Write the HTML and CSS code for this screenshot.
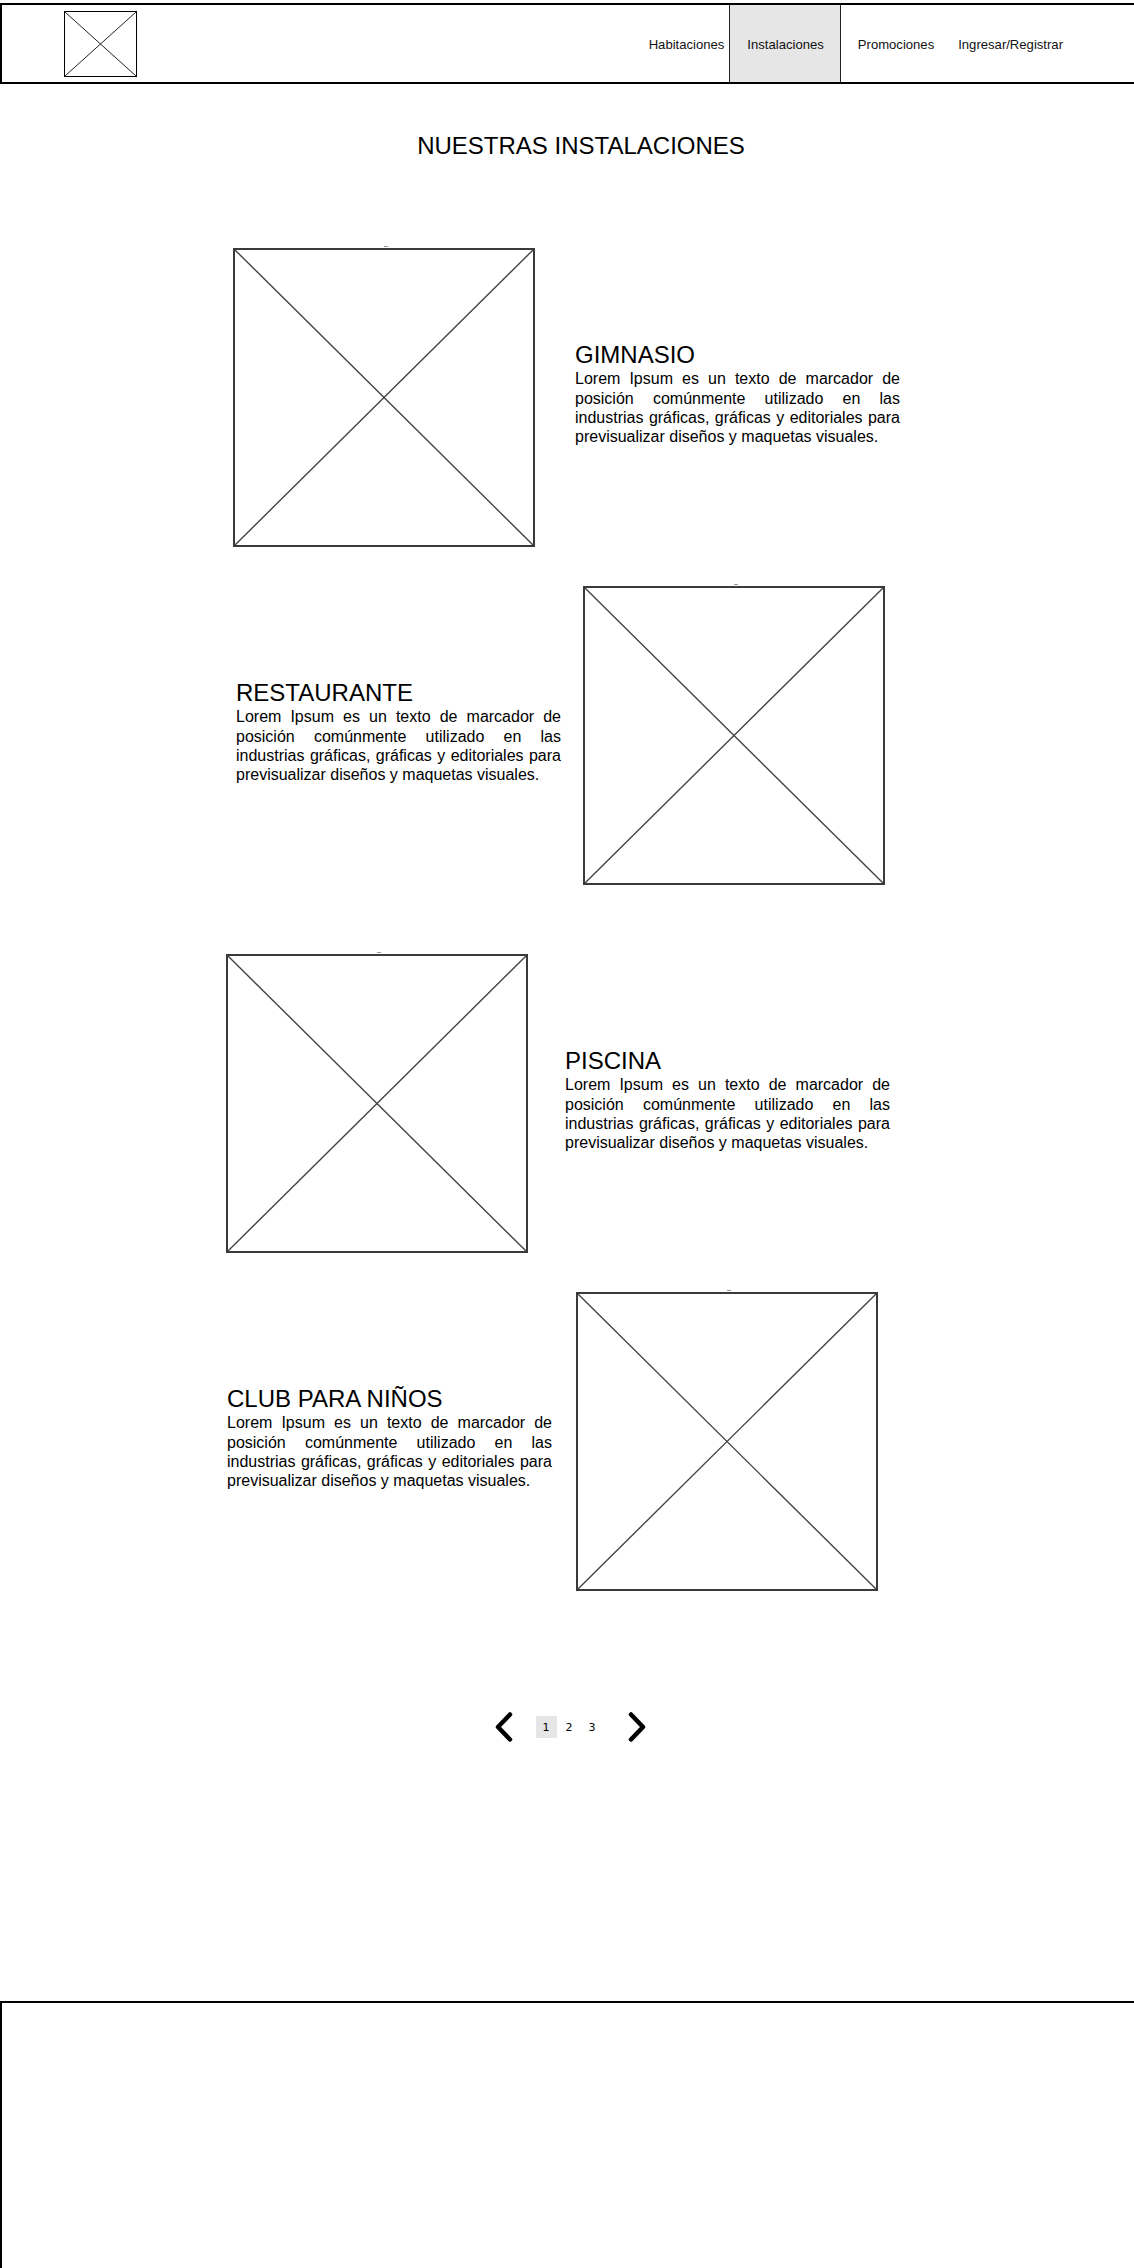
FILE: index.html
```html
<!DOCTYPE html>
<html lang="es">
<head>
<meta charset="utf-8">
<title>Nuestras Instalaciones</title>
<link rel="stylesheet" href="styles.css">
</head>
<body>
<header class="topbar">
  <div class="logo">
    <svg class="cross" viewBox="0 0 100 100" preserveAspectRatio="none">
      <line x1="0" y1="0" x2="100" y2="100" vector-effect="non-scaling-stroke"/>
      <line x1="100" y1="0" x2="0" y2="100" vector-effect="non-scaling-stroke"/>
    </svg>
  </div>
  <nav class="nav">
    <a class="nav-item nav-first">Habitaciones</a>
    <a class="nav-item nav-active">Instalaciones</a>
    <a class="nav-item nav-promo">Promociones</a>
    <a class="nav-item nav-login">Ingresar/Registrar</a>
  </nav>
</header>

<main class="content">
  <h1 class="page-title">NUESTRAS INSTALACIONES</h1>

  <section class="facility f1">
    <div class="photo">
      <svg class="cross" viewBox="0 0 100 100" preserveAspectRatio="none">
        <line x1="0" y1="0" x2="100" y2="100" vector-effect="non-scaling-stroke"/>
        <line x1="100" y1="0" x2="0" y2="100" vector-effect="non-scaling-stroke"/>
      </svg>
    </div>
    <div class="info">
      <h2 class="info-title">GIMNASIO</h2>
      <p class="info-text">Lorem Ipsum es un texto de marcador de posición comúnmente utilizado en las industrias gráficas, gráficas y editoriales para previsualizar diseños y maquetas visuales.</p>
    </div>
  </section>

  <section class="facility f2">
    <div class="info">
      <h2 class="info-title">RESTAURANTE</h2>
      <p class="info-text">Lorem Ipsum es un texto de marcador de posición comúnmente utilizado en las industrias gráficas, gráficas y editoriales para previsualizar diseños y maquetas visuales.</p>
    </div>
    <div class="photo">
      <svg class="cross" viewBox="0 0 100 100" preserveAspectRatio="none">
        <line x1="0" y1="0" x2="100" y2="100" vector-effect="non-scaling-stroke"/>
        <line x1="100" y1="0" x2="0" y2="100" vector-effect="non-scaling-stroke"/>
      </svg>
    </div>
  </section>

  <section class="facility f3">
    <div class="photo">
      <svg class="cross" viewBox="0 0 100 100" preserveAspectRatio="none">
        <line x1="0" y1="0" x2="100" y2="100" vector-effect="non-scaling-stroke"/>
        <line x1="100" y1="0" x2="0" y2="100" vector-effect="non-scaling-stroke"/>
      </svg>
    </div>
    <div class="info">
      <h2 class="info-title">PISCINA</h2>
      <p class="info-text">Lorem Ipsum es un texto de marcador de posición comúnmente utilizado en las industrias gráficas, gráficas y editoriales para previsualizar diseños y maquetas visuales.</p>
    </div>
  </section>

  <section class="facility f4">
    <div class="info">
      <h2 class="info-title">CLUB PARA NIÑOS</h2>
      <p class="info-text">Lorem Ipsum es un texto de marcador de posición comúnmente utilizado en las industrias gráficas, gráficas y editoriales para previsualizar diseños y maquetas visuales.</p>
    </div>
    <div class="photo">
      <svg class="cross" viewBox="0 0 100 100" preserveAspectRatio="none">
        <line x1="0" y1="0" x2="100" y2="100" vector-effect="non-scaling-stroke"/>
        <line x1="100" y1="0" x2="0" y2="100" vector-effect="non-scaling-stroke"/>
      </svg>
    </div>
  </section>

  <div class="pager">
    <svg class="chev chev-left" viewBox="0 0 20 30">
      <polyline points="16,2.5 4,15 16,27.5"/>
    </svg>
    <span class="page page-current">1</span>
    <span class="page">2</span>
    <span class="page">3</span>
    <svg class="chev chev-right" viewBox="0 0 20 30">
      <polyline points="4,2.5 16,15 4,27.5"/>
    </svg>
  </div>
</main>

<footer class="footer"></footer>
</body>
</html>
```

FILE: styles.css
```css
* { box-sizing: border-box; }

html, body {
  margin: 0;
  padding: 0;
  background: #fff;
}

body {
  font-family: "Liberation Sans", Arial, sans-serif;
  color: #000;
  overflow: hidden;
}

.cross {
  display: block;
  width: 100%;
  height: 100%;
}

.cross line {
  stroke: #333;
  stroke-width: 1.3;
}

/* Header */
.topbar {
  margin-top: 3px;
  height: 81px;
  border-top: 2px solid #000;
  border-bottom: 2px solid #000;
  border-left: 2px solid #000;
  display: flex;
  align-items: stretch;
}

.logo {
  align-self: center;
  width: 73px;
  height: 66px;
  margin-left: 62px;
  border: 1.5px solid #000;
}

.logo .cross line {
  stroke: #222;
  stroke-width: 1;
}

.nav {
  margin-left: auto;
  display: flex;
  align-items: stretch;
  font-size: 13.1px;
  color: #111;
}

.nav-item {
  display: flex;
  align-items: center;
  padding-top: 1px;
}

.nav-first { padding-right: 5px; }

.nav-active {
  background: #e6e6e6;
  border-left: 1px solid #222;
  border-right: 1px solid #222;
  padding-left: 17px;
  padding-right: 16px;
}

.nav-promo { padding-left: 17px; }

.nav-login {
  padding-left: 24px;
  margin-right: 71px;
}

/* Title */
.page-title {
  margin: 48px 0 0;
  padding-left: 28px;
  text-align: center;
  font-size: 24px;
  font-weight: normal;
  line-height: 28px;
  color: #000;
}

/* Facilities */
.facility {
  display: flex;
  align-items: center;
}

.f1 { margin: 88px 0 0 233px; gap: 40px; }
.f2 { margin: 39px 0 0 236px; gap: 22px; }
.f3 { margin: 69px 0 0 226px; gap: 37px; }
.f4 { margin: 39px 0 0 227px; gap: 24px; }

.photo {
  position: relative;
  flex: none;
  width: 302px;
  height: 299px;
  border: 2px solid #3a3a3a;
}

.photo::before {
  content: "";
  position: absolute;
  top: -4px;
  left: 50%;
  width: 4px;
  height: 1px;
  background: #999;
}

.photo .cross line {
  stroke: #444;
  stroke-width: 1.4;
}

.info {
  width: 325px;
  flex: none;
  margin-top: -5.5px;
}

.info-title {
  margin: 0 0 2.5px;
  font-size: 24px;
  font-weight: normal;
  line-height: 24px;
  color: #000;
}

.info-text {
  margin: 0;
  font-size: 16px;
  line-height: 19.3px;
  text-align: justify;
  color: #000;
}

/* Pager */
.pager {
  margin-top: 121px;
  display: flex;
  align-items: center;
  justify-content: center;
  padding-left: 6px;
  height: 30px;
}

.chev {
  width: 20px;
  height: 30px;
  flex: none;
}

.chev polyline {
  fill: none;
  stroke: #000;
  stroke-width: 4.5;
  stroke-linecap: round;
  stroke-linejoin: round;
}

.chev-left { margin-right: 22px; }
.chev-right { margin-left: 24px; }

.page {
  width: 21px;
  height: 22px;
  display: flex;
  align-items: center;
  justify-content: center;
  font-family: "DejaVu Sans", sans-serif;
  font-size: 11px;
  color: #000;
  margin-right: 2px;
}

.page:last-of-type { margin-right: 0; }

.page-current { background: #e6e6e6; }

/* Footer */
.footer {
  margin-top: 259px;
  height: 300px;
  border-top: 2px solid #000;
  border-left: 2px solid #000;
}
```
